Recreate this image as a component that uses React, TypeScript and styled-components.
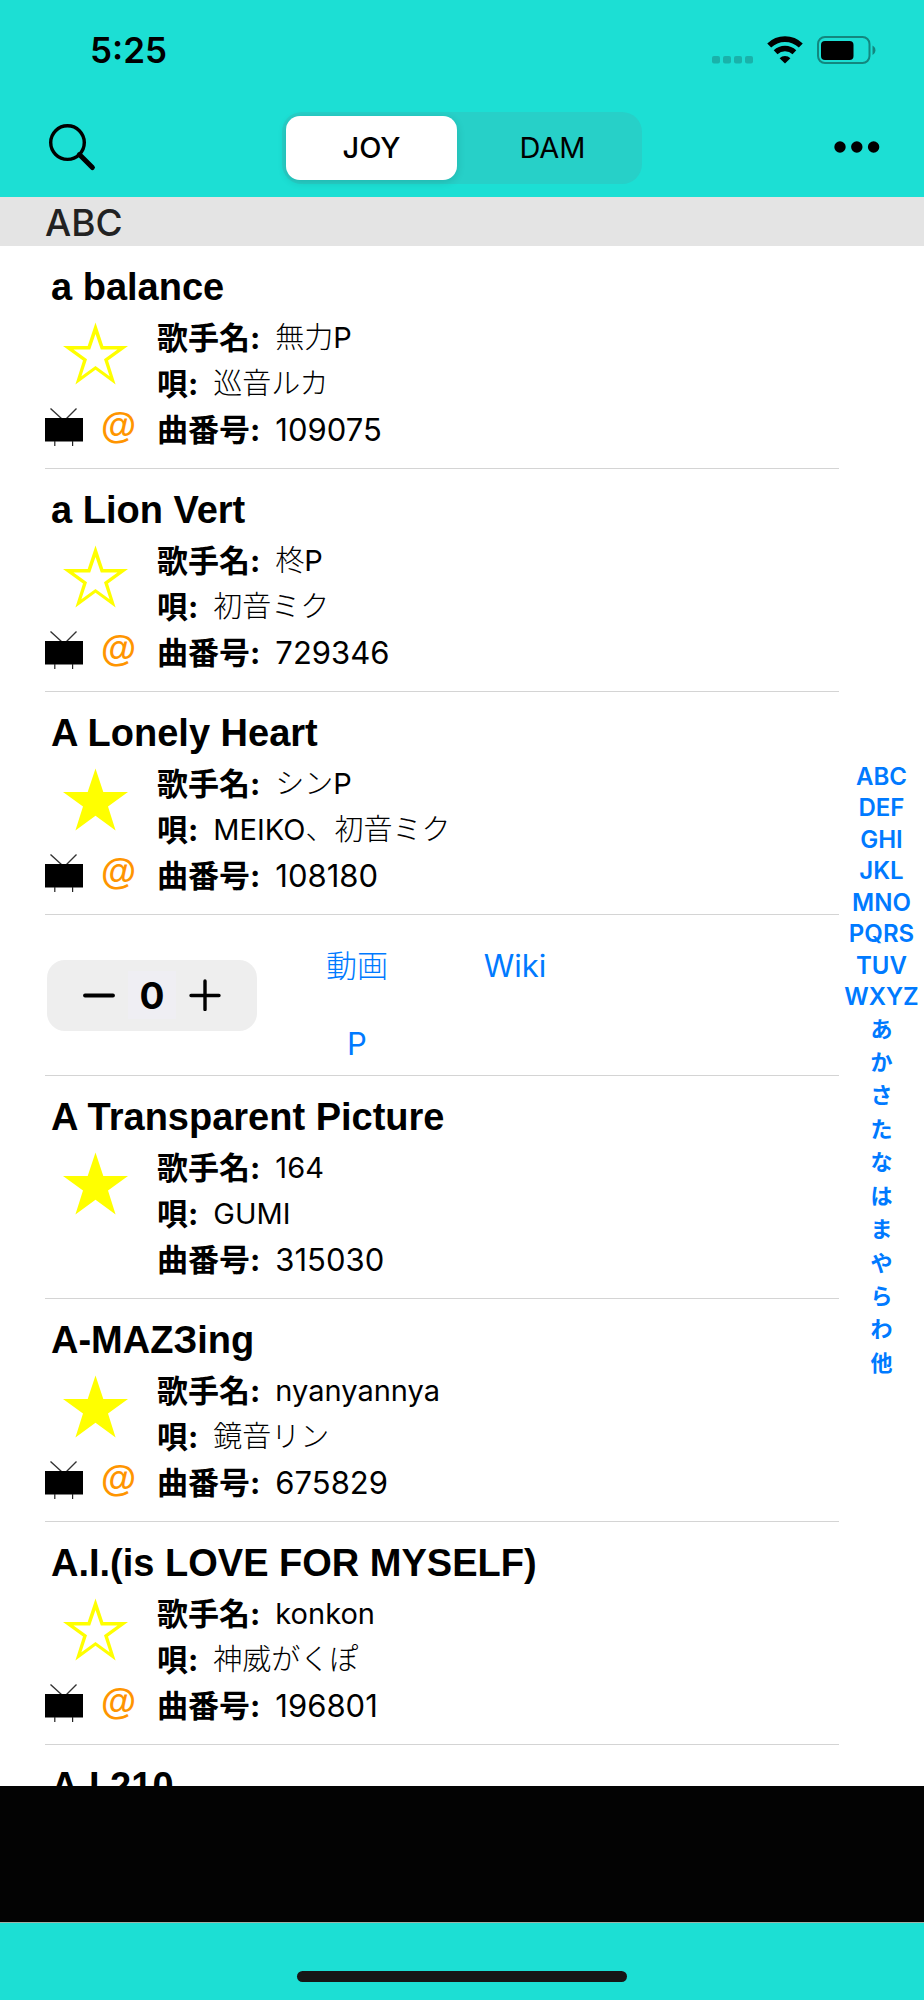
import React, { useState } from "react";
import styled, { createGlobalStyle, css } from "styled-components";

const aqua = "#1cdfd4";
const blue = "#007aff";
const sans = `Inter, "Noto Sans CJK JP", sans-serif`;
const lightKana = `Inter, "Noto Sans CJK JP Light", "Noto Sans CJK JP", sans-serif`;

const GlobalStyle = createGlobalStyle`
  *, *::before, *::after { box-sizing: border-box; }
  body { margin: 0; background: #fff; color: #000; font-family: ${sans}; }
  button { margin: 0; padding: 0; border: 0; background: none; color: inherit; font: inherit; cursor: pointer; }
  ul, dl, dd, h1, h2 { margin: 0; padding: 0; }
  ul { list-style: none; }
  svg { display: block; }
`;

const Screen = styled.div`
  display: flex;
  flex-direction: column;
  height: 100vh;
  overflow: hidden;
`;

const TopBar = styled.header`
  flex: none;
  background: ${aqua};
`;

const StatusBar = styled.div`
  display: flex;
  align-items: center;
  justify-content: space-between;
  height: 100px;
  padding: 0 48px 0 90px;
`;

const Clock = styled.time`
  font-size: 35px;
  line-height: 40px;
  font-weight: 600;
`;

const StatusIcons = styled.div`
  display: flex;
  align-items: center;
  gap: 14px;
`;

const NavBar = styled.nav`
  display: grid;
  grid-template-columns: 1fr auto 1fr;
  align-items: center;
  height: 97px;
  padding: 0 44px 2px;
`;

const IconButton = styled.button<{ $end?: boolean }>`
  justify-self: ${(p) => (p.$end ? "end" : "start")};
`;

const Segments = styled.div`
  display: flex;
  gap: 10px;
  width: 360px;
  height: 72px;
  padding: 4px;
  border-radius: 20px;
  background: #27d0c8;
`;

const Segment = styled.button<{ $active: boolean }>`
  flex: 1;
  border-radius: 14px;
  font-size: 29px;
  line-height: 36px;
  font-weight: 400;
  ${(p) =>
    p.$active &&
    css`
      background: #fff;
      font-weight: 500;
      box-shadow: 0 2px 8px rgba(0, 0, 0, 0.14);
    `}
`;

const SectionTitle = styled.h2`
  flex: none;
  padding: 6px 45px 3px;
  background: #e4e4e4;
  color: #222;
  font-size: 37px;
  line-height: 40px;
  font-weight: 500;
`;

const Body = styled.main`
  display: flex;
  flex: 1 1 0;
  min-height: 0;
  overflow: hidden;
`;

const SongList = styled.ul`
  flex: 1;
  min-width: 0;
  padding-left: 45px;
`;

const SongRow = styled.li`
  padding: 20px 0 15px;
  border-bottom: 1px solid #d4d4d4;
`;

const SongTitle = styled.h2`
  padding: 0 6px 6px;
  font-family: "Liberation Sans", Arial, sans-serif;
  font-size: 38px;
  line-height: 42px;
  font-weight: 700;
  white-space: nowrap;
`;

const SongBody = styled.div`
  display: flex;
`;

const Marks = styled.div`
  display: flex;
  flex-direction: column;
  justify-content: space-between;
  width: 112px;
  padding: 8px 0 7px;
`;

const StarButton = styled.button`
  margin-left: 18px;
  align-self: flex-start;
`;

const Badges = styled.div`
  display: flex;
  align-items: flex-end;
  gap: 18px;
`;

const AtMark = styled.span`
  color: #ff9500;
  font-family: "Liberation Sans", Arial, sans-serif;
  font-size: 36px;
  line-height: 40px;
  font-weight: 700;
`;

const Details = styled.dl`
  flex: 1;
  min-width: 0;
  padding-top: 1px;
`;

const Detail = styled.div`
  display: flex;
  gap: 15px;
  height: 46px;
  line-height: 46px;
  white-space: nowrap;
`;

const Label = styled.dt`
  font-size: 31px;
  font-weight: 700;
`;

const Value = styled.dd<{ $numeric?: boolean }>`
  font-family: ${lightKana};
  font-size: ${(p) => (p.$numeric ? 31 : 29)}px;
  font-weight: 400;
`;

const ActionRow = styled.li`
  display: flex;
  align-items: center;
  height: 161px;
  border-bottom: 1px solid #d4d4d4;
`;

const Stepper = styled.div`
  display: flex;
  align-items: center;
  justify-content: space-between;
  width: 210px;
  height: 71px;
  margin-left: 2px;
  padding: 0 36px;
  border-radius: 18px;
  background: #eee;
`;

const Count = styled.output`
  padding: 2px 12px 0;
  background: #efeef3;
  font-size: 37px;
  line-height: 46px;
  font-weight: 700;
`;

const Links = styled.div`
  display: grid;
  grid-template-columns: 158px 158px;
  grid-auto-rows: 78px;
  place-items: center;
  margin-left: 21px;
  padding-top: 20px;
`;

const ActionLink = styled.a`
  color: ${blue};
  font-family: ${lightKana};
  font-size: 31px;
  line-height: 40px;
  font-weight: 400;
  text-decoration: none;
`;

const IndexRail = styled.nav`
  display: flex;
  flex: none;
  flex-direction: column;
  align-items: center;
  justify-content: center;
  width: 85px;
  padding-top: 109px;
`;

const IndexList = styled.ul`
  display: flex;
  flex-direction: column;
  justify-content: space-between;
  min-height: 619px;
  text-align: center;
`;

const IndexLink = styled.a<{ $kana: boolean }>`
  display: block;
  color: ${blue};
  font-size: ${(p) => (p.$kana ? 22 : 24)}px;
  line-height: ${(p) => (p.$kana ? 33 : 31)}px;
  font-weight: 600;
  text-decoration: none;
`;

const BlackBand = styled.div`
  flex: none;
  height: 137px;
  border-bottom: 1px solid #9db3a8;
  background: #030303;
`;

const HomeArea = styled.footer`
  display: flex;
  flex: none;
  justify-content: center;
  align-items: flex-end;
  height: 77px;
  padding-bottom: 18px;
  background: ${aqua};
`;

const HomeIndicator = styled.div`
  width: 330px;
  height: 11px;
  border-radius: 6px;
  background: #161616;
`;

type Song = {
  title: string;
  artist: string;
  singer: string;
  number: string;
  starred: boolean;
  badges: boolean;
  open?: boolean;
};

const songs: Song[] = [
  { title: "a balance", artist: "無力P", singer: "巡音ルカ", number: "109075", starred: false, badges: true },
  { title: "a Lion Vert", artist: "柊P", singer: "初音ミク", number: "729346", starred: false, badges: true },
  { title: "A Lonely Heart", artist: "シンP", singer: "MEIKO、初音ミク", number: "108180", starred: true, badges: true, open: true },
  { title: "A Transparent Picture", artist: "164", singer: "GUMI", number: "315030", starred: true, badges: false },
  { title: "A-MAZЗing", artist: "nyanyannya", singer: "鏡音リン", number: "675829", starred: true, badges: true },
  { title: "A.I.(is LOVE FOR MYSELF)", artist: "konkon", singer: "神威がくぽ", number: "196801", starred: false, badges: true },
  { title: "A.I.210", artist: "", singer: "", number: "", starred: false, badges: false },
];

const latinIndex = ["ABC", "DEF", "GHI", "JKL", "MNO", "PQRS", "TUV", "WXYZ"];
const kanaIndex = ["あ", "か", "さ", "た", "な", "は", "ま", "や", "ら", "わ", "他"];

const SignalDots = () => (
  <svg width="41" height="28" viewBox="0 0 41 28" fill="#19b2aa" aria-hidden="true">
    {[0, 11, 22, 33].map((x) => (
      <rect key={x} x={x} y="20" width="8" height="7.5" rx="2" />
    ))}
  </svg>
);

const Wifi = () => (
  <svg width="36" height="28" viewBox="0 0 36 28" aria-hidden="true">
    <path d="M2.2 9.6 A22.6 22.6 0 0 1 33.8 9.6" fill="none" stroke="#000" strokeWidth="5.6" />
    <path d="M8.6 16.2 A13.6 13.6 0 0 1 27.4 16.2" fill="none" stroke="#000" strokeWidth="5.4" />
    <path d="M12.6 22.2 A7.8 7.8 0 0 1 23.4 22.2 L18 27.6 Z" fill="#000" />
  </svg>
);

const Battery = () => (
  <svg width="59" height="28" viewBox="0 0 59 28" aria-hidden="true">
    <rect x="1" y="1" width="51.5" height="26" rx="7" fill="none" stroke="#13877f" strokeWidth="2" />
    <rect x="4" y="5" width="32.5" height="19" rx="4" fill="#000" />
    <path d="M55.5 9.5 C59.4 11.6 59.4 16.8 55.5 18.9 Z" fill="#13877f" />
  </svg>
);

const SearchIcon = () => (
  <svg width="52" height="48" viewBox="-4 0 52 48" fill="none" stroke="#000" aria-hidden="true">
    <circle cx="19.5" cy="18.6" r="16.8" strokeWidth="3.4" />
    <path d="M31.4 30.6 L44.4 43.6" strokeWidth="5" strokeLinecap="round" />
  </svg>
);

const MoreIcon = () => (
  <svg width="46" height="14" viewBox="0 0 46 14" aria-hidden="true">
    <circle cx="6" cy="6" r="5.7" />
    <circle cx="22.8" cy="6" r="5.7" />
    <circle cx="39.6" cy="6" r="5.7" />
  </svg>
);

const starOuter = "M32.5 0.5 L40.3 24 L65 24 L45 38.6 L52.6 62.5 L32.5 47.8 L12.4 62.5 L20 38.6 L0 24 L24.7 24 Z";
const starInner = "M32.5 12 L37.8 27.6 L54.5 27.6 L41 37.3 L46.6 54.3 L32.5 44 L18.4 54.3 L24 37.3 L10.5 27.6 L27.2 27.6 Z";

const Star = ({ filled }: { filled: boolean }) => (
  <svg width="65" height="63" viewBox="0 0 65 63" aria-hidden="true">
    <path d={filled ? starOuter : starOuter + " " + starInner} fill="#ff0" fillRule="evenodd" />
  </svg>
);

const Tv = () => (
  <svg width="38" height="38" viewBox="0 0 38 38" role="img" aria-label="TV">
    <path d="M5.5 0.5 L17 11 M31.5 0.5 L21 11" stroke="#333" strokeWidth="1.4" fill="none" />
    <rect x="0" y="10" width="38" height="23.5" />
    <path d="M9.8 33 V38 M27.6 33 V38" stroke="#222" strokeWidth="1.2" />
  </svg>
);

const Minus = () => (
  <svg width="32" height="32" viewBox="0 0 32 32" stroke="#000" strokeWidth="3.8" strokeLinecap="round" aria-hidden="true">
    <path d="M2 16.5 H30" />
  </svg>
);

const Plus = () => (
  <svg width="32" height="32" viewBox="0 0 32 32" stroke="#000" strokeWidth="3.4" strokeLinecap="round" aria-hidden="true">
    <path d="M2 16.5 H30 M16 2 V30.5" />
  </svg>
);

const Actions = () => {
  const [count, setCount] = useState(0);
  return (
    <ActionRow>
      <Stepper>
        <button type="button" aria-label="減らす" onClick={() => setCount(Math.max(0, count - 1))}>
          <Minus />
        </button>
        <Count>{count}</Count>
        <button type="button" aria-label="増やす" onClick={() => setCount(count + 1)}>
          <Plus />
        </button>
      </Stepper>
      <Links>
        <ActionLink href="#video">動画</ActionLink>
        <ActionLink href="#wiki">Wiki</ActionLink>
        <ActionLink href="#p">P</ActionLink>
      </Links>
    </ActionRow>
  );
};

const SongItem = ({ song }: { song: Song }) => {
  const [starred, setStarred] = useState(song.starred);
  return (
    <SongRow>
      <SongTitle>{song.title}</SongTitle>
      {song.number && (
        <SongBody>
          <Marks>
            <StarButton type="button" aria-label="お気に入り" aria-pressed={starred} onClick={() => setStarred(!starred)}>
              <Star filled={starred} />
            </StarButton>
            {song.badges && (
              <Badges>
                <Tv />
                <AtMark>@</AtMark>
              </Badges>
            )}
          </Marks>
          <Details>
            <Detail>
              <Label>歌手名:</Label>
              <Value>{song.artist}</Value>
            </Detail>
            <Detail>
              <Label>唄:</Label>
              <Value>{song.singer}</Value>
            </Detail>
            <Detail>
              <Label>曲番号:</Label>
              <Value $numeric>{song.number}</Value>
            </Detail>
          </Details>
        </SongBody>
      )}
    </SongRow>
  );
};

export default function App() {
  const [source, setSource] = useState("JOY");
  return (
    <Screen>
      <GlobalStyle />
      <TopBar>
        <StatusBar>
          <Clock>5:25</Clock>
          <StatusIcons>
            <SignalDots />
            <Wifi />
            <Battery />
          </StatusIcons>
        </StatusBar>
        <NavBar>
          <IconButton type="button" aria-label="検索">
            <SearchIcon />
          </IconButton>
          <Segments>
            {["JOY", "DAM"].map((name) => (
              <Segment key={name} type="button" $active={source === name} aria-pressed={source === name} onClick={() => setSource(name)}>
                {name}
              </Segment>
            ))}
          </Segments>
          <IconButton $end type="button" aria-label="メニュー">
            <MoreIcon />
          </IconButton>
        </NavBar>
      </TopBar>
      <SectionTitle>ABC</SectionTitle>
      <Body>
        <SongList>
          {songs.map((song) => (
            <React.Fragment key={song.title}>
              <SongItem song={song} />
              {song.open && <Actions />}
            </React.Fragment>
          ))}
        </SongList>
        <IndexRail aria-label="索引">
          <IndexList>
            {[...latinIndex, ...kanaIndex].map((name) => (
              <li key={name}>
                <IndexLink href={"#" + name} $kana={name.length === 1}>
                  {name}
                </IndexLink>
              </li>
            ))}
          </IndexList>
        </IndexRail>
      </Body>
      <BlackBand />
      <HomeArea>
        <HomeIndicator />
      </HomeArea>
    </Screen>
  );
}
